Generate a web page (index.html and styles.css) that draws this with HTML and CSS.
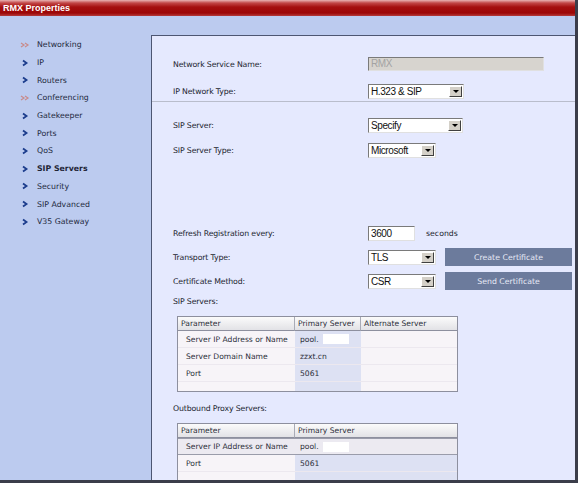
FILE: index.html
```html
<!DOCTYPE html>
<html lang="en">
<head>
    <meta charset="UTF-8">
    <title>RMX Properties</title>
    <link rel="stylesheet" href="styles.css">
</head>
<body>
    <div class="window">
        <div class="titlebar">RMX Properties</div>
        <div class="body">
            <ul class="nav">
                <li><svg class="ico" viewBox="0 0 10 8"><path d="M1 2 L4 4 L1 6 M5 2 L8 4 L5 6" fill="none" stroke="#c98a8a" stroke-width="1.2"/></svg>Networking</li>
                <li><svg class="ico" viewBox="0 0 10 8"><path d="M3 1.5 L6.5 4 L3 6.5" fill="none" stroke="#1b3c8c" stroke-width="1.8"/></svg>IP</li>
                <li><svg class="ico" viewBox="0 0 10 8"><path d="M3 1.5 L6.5 4 L3 6.5" fill="none" stroke="#1b3c8c" stroke-width="1.8"/></svg>Routers</li>
                <li><svg class="ico" viewBox="0 0 10 8"><path d="M1 2 L4 4 L1 6 M5 2 L8 4 L5 6" fill="none" stroke="#c98a8a" stroke-width="1.2"/></svg>Conferencing</li>
                <li><svg class="ico" viewBox="0 0 10 8"><path d="M3 1.5 L6.5 4 L3 6.5" fill="none" stroke="#1b3c8c" stroke-width="1.8"/></svg>Gatekeeper</li>
                <li><svg class="ico" viewBox="0 0 10 8"><path d="M3 1.5 L6.5 4 L3 6.5" fill="none" stroke="#1b3c8c" stroke-width="1.8"/></svg>Ports</li>
                <li><svg class="ico" viewBox="0 0 10 8"><path d="M3 1.5 L6.5 4 L3 6.5" fill="none" stroke="#1b3c8c" stroke-width="1.8"/></svg>QoS</li>
                <li class="active"><svg class="ico" viewBox="0 0 10 8"><path d="M3 1.5 L6.5 4 L3 6.5" fill="none" stroke="#1b3c8c" stroke-width="1.8"/></svg>SIP Servers</li>
                <li><svg class="ico" viewBox="0 0 10 8"><path d="M3 1.5 L6.5 4 L3 6.5" fill="none" stroke="#1b3c8c" stroke-width="1.8"/></svg>Security</li>
                <li><svg class="ico" viewBox="0 0 10 8"><path d="M3 1.5 L6.5 4 L3 6.5" fill="none" stroke="#1b3c8c" stroke-width="1.8"/></svg>SIP Advanced</li>
                <li><svg class="ico" viewBox="0 0 10 8"><path d="M3 1.5 L6.5 4 L3 6.5" fill="none" stroke="#1b3c8c" stroke-width="1.8"/></svg>V35 Gateway</li>
            </ul>

            <div class="panel">
                <div class="row r1">
                    <span class="label">Network Service Name:</span>
                    <div class="textbox disabled w-name">RMX</div>
                </div>
                <div class="row r2">
                    <span class="label">IP Network Type:</span>
                    <div class="select w96">H.323 &amp; SIP<span class="arrow"></span></div>
                </div>
                <div class="divider"></div>

                <div class="row r3">
                    <span class="label">SIP Server:</span>
                    <div class="select w95">Specify<span class="arrow"></span></div>
                </div>
                <div class="row r4">
                    <span class="label">SIP Server Type:</span>
                    <div class="select w68">Microsoft<span class="arrow"></span></div>
                </div>

                <div class="row r5">
                    <span class="label">Refresh Registration every:</span>
                    <div class="textbox w-sec">3600</div>
                    <span class="unit">seconds</span>
                </div>
                <div class="row r6">
                    <span class="label">Transport Type:</span>
                    <div class="select w68">TLS<span class="arrow"></span></div>
                    <button class="btn">Create Certificate</button>
                </div>
                <div class="row r7">
                    <span class="label">Certificate Method:</span>
                    <div class="select w68">CSR<span class="arrow"></span></div>
                    <button class="btn">Send Certificate</button>
                </div>

                <div class="heading h1">SIP Servers:</div>
                <div class="grid three">
                    <div class="th">Parameter</div>
                    <div class="th">Primary Server</div>
                    <div class="th last">Alternate Server</div>

                    <div class="td">Server IP Address or Name</div>
                    <div class="td prim">pool.<span class="blank"></span></div>
                    <div class="td"></div>

                    <div class="td">Server Domain Name</div>
                    <div class="td prim">zzxt.cn</div>
                    <div class="td"></div>

                    <div class="td">Port</div>
                    <div class="td prim">5061</div>
                    <div class="td"></div>

                    <div class="filler"></div>
                    <div class="filler prim"></div>
                    <div class="filler"></div>
                </div>

                <div class="heading h2">Outbound Proxy Servers:</div>
                <div class="grid two">
                    <div class="th">Parameter</div>
                    <div class="th last">Primary Server</div>

                    <div class="td sel">Server IP Address or Name</div>
                    <div class="td sel">pool.<span class="blank"></span></div>

                    <div class="td">Port</div>
                    <div class="td prim">5061</div>

                    <div class="filler"></div>
                    <div class="filler prim"></div>
                </div>
            </div>
        </div>
    </div>
</body>
</html>
```

FILE: styles.css
```css
body {
    margin: 0;
    background-color: #fff;
    font-family: "DejaVu Sans", Verdana, sans-serif;
}
.window {
    width: 575px;
    height: 480px;
    border-right: 3px solid #3b3d4a;
    border-bottom: 3px solid #3b3d4a;
    background-color: #bccbef;
    overflow: hidden;
}
.titlebar {
    height: 16px;
    line-height: 17px;
    padding-left: 3px;
    background: linear-gradient(#e9b3b3 0, #c24646 3px, #a50f0f 7px, #9c0606 13px, #b43a3a 16px);
    color: #fff;
    font-family: "Liberation Sans", Arial, sans-serif;
    font-size: 9px;
    font-weight: bold;
}
.body {
    display: flex;
    height: 464px;
}
.nav {
    width: 151px;
    margin: 0;
    padding: 20px 0 0 0;
    list-style: none;
    flex-shrink: 0;
}
.nav li {
    display: flex;
    align-items: center;
    height: 17.7px;
    padding-left: 20px;
    font-size: 7.8px;
    color: #232a3e;
}
.nav li.active {
    font-weight: bold;
    color: #1e2436;
}
.ico {
    width: 10px;
    height: 8px;
    margin-right: 7px;
}
.panel {
    flex: 1;
    margin-top: 19px;
    border-top: 1px solid #4d5672;
    border-left: 1px solid #4d5672;
    background-color: #e5e9fe;
    overflow: hidden;
}
.row {
    display: flex;
    align-items: center;
    height: 16px;
    padding-left: 21px;
}
.label {
    width: 195px;
    flex-shrink: 0;
    font-size: 7.8px;
    letter-spacing: -0.15px;
    color: #22252f;
}
.r1 { margin-top: 20px; }
.r2 { margin-top: 11px; }
.r3 { margin-top: 15px; }
.r4 { margin-top: 9px; }
.r5 { margin-top: 66px; height: 18px; }
.r6 { margin-top: 6px; height: 18px; }
.r7 { margin-top: 6px; height: 18px; }
.divider {
    margin-top: 2px;
    height: 1px;
    background-color: #b9bdcc;
}
.textbox,
.select {
    position: relative;
    box-sizing: border-box;
    height: 15px;
    line-height: 13px;
    padding-left: 2px;
    border-top: 1px solid #7a7a7a;
    border-left: 1px solid #7a7a7a;
    border-right: 1px solid #e0e0e0;
    border-bottom: 1px solid #e0e0e0;
    background-color: #fff;
    font-family: "Liberation Sans", Arial, sans-serif;
    font-size: 10px;
    letter-spacing: -0.4px;
    color: #111;
}
.disabled {
    background-color: #d7d4cf;
    color: #a3a3a3;
    height: 14px;
    line-height: 12px;
}
.w-name { width: 176px; }
.w-sec { width: 47px; }
.w96 { width: 96px; }
.w95 { width: 95px; }
.w68 { width: 68px; }
.arrow {
    position: absolute;
    top: 1px;
    right: 1px;
    width: 11px;
    height: 9px;
    background-color: #d4d0c8;
    border-top: 1px solid #fff;
    border-left: 1px solid #fff;
    border-right: 1px solid #404040;
    border-bottom: 1px solid #404040;
}
.arrow::after {
    content: "";
    position: absolute;
    left: 3px;
    top: 3px;
    border-left: 3px solid transparent;
    border-right: 3px solid transparent;
    border-top: 3px solid #000;
}
.unit {
    margin-left: 11px;
    font-size: 7.8px;
    color: #22252f;
}
.btn {
    width: 127px;
    height: 18px;
    margin-left: 9px;
    padding: 0;
    border: none;
    background-color: #6c7b9c;
    color: #e6eaf6;
    font-family: "DejaVu Sans", Verdana, sans-serif;
    font-size: 7.8px;
}
.heading {
    height: 12px;
    line-height: 12px;
    padding-left: 21px;
    font-size: 7.8px;
    letter-spacing: -0.15px;
    color: #22252f;
}
.h1 { margin-top: 6px; }
.h2 { margin-top: 11px; }
.grid {
    display: grid;
    width: 279px;
    margin: 8px 0 0 25px;
    border: 1px solid #8d8f9e;
    background-color: #f7f4f8;
    font-size: 7.6px;
    color: #2c2f3a;
}
.three { grid-template-columns: 117px 66px 96px; }
.two { grid-template-columns: 117px 162px; }
.th {
    height: 13px;
    line-height: 13px;
    padding-left: 3px;
    background: linear-gradient(#fbfbfb, #e2e2e6);
    border-bottom: 1px solid #8d8f9e;
    border-right: 1px solid #a9abb6;
}
.th.last { border-right: none; }
.td {
    display: flex;
    align-items: center;
    height: 16px;
    padding-left: 8px;
    border-bottom: 1px solid #ece8ef;
}
.td.prim,
.td.sel + .td.sel {
    padding-left: 5px;
}
.prim { background-color: #dde1f3; }
.td.sel {
    height: 15px;
    background-color: #eceaf1;
    border-top: 1px solid #9a9caa;
    border-bottom: 1px solid #9a9caa;
}
.blank {
    display: inline-block;
    width: 26px;
    height: 10px;
    margin-left: 4px;
    background-color: #fff;
}
.filler { height: 9px; }
```
